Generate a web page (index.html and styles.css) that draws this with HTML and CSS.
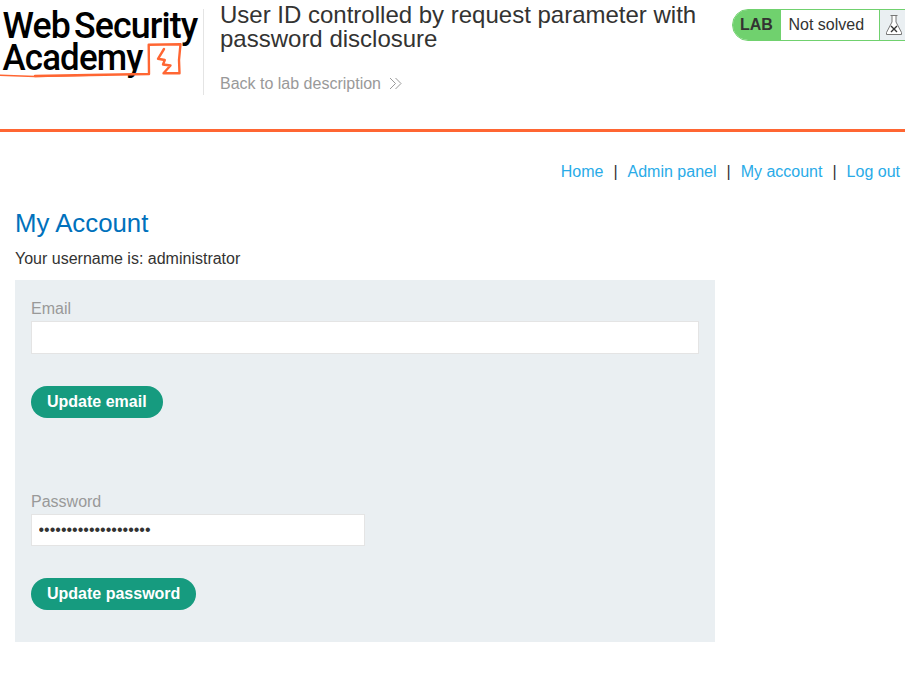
FILE: index.html
```html
<!DOCTYPE html>
<html lang="en">
<head>
<meta charset="utf-8">
<title>User ID controlled by request parameter with password disclosure</title>
<link rel="stylesheet" href="styles.css">
</head>
<body>
<header class="lab-header">
  <svg class="logo" width="203" height="90" viewBox="0 0 203 90" role="img" aria-label="Web Security Academy">
    <g class="logo-text">
      <text x="2.5" y="37.500" textLength="67.500" lengthAdjust="spacingAndGlyphs">Web</text>
      <text x="74" y="37.500" textLength="123.500" lengthAdjust="spacingAndGlyphs">Security</text>
      <text x="2.500" y="70" textLength="140" lengthAdjust="spacingAndGlyphs">Academy</text>
    </g>
    <g class="logo-mark">
      <path d="M35 76Q60 75.500 90 75T149 74L148.700 44.700L180.500 44.200L179 60L179.500 73.200L163.500 73.200L170.500 65.500L163 64.500L164.800 60L158 58.800L164 49"/>
      <path class="thin" d="M0 75.300L35 76.500L100 75"/>
    </g>
  </svg>
  <div class="title">
    <h2>User ID controlled by request parameter with password disclosure</h2>
    <a class="back">Back to lab description
      <svg width="13" height="14" viewBox="0 0 13 14"><path d="M1 1L6.500 6.500L1 12M6.500 1L12 6.500L6.500 12"/></svg>
    </a>
  </div>
  <div class="status">
    <span class="lab">LAB</span>
    <p>Not solved</p>
    <span class="flask">
      <svg width="18" height="22" viewBox="0 0 18 22"><path class="glass" d="M5.500 1.500H12.500M7 1.500V8L1.500 18.500V20.500H16.500V18.500L11 8V1.500"/><path class="cross" d="M6 12L12 18M12 12L6 18"/></svg>
    </span>
  </div>
</header>
<main>
  <nav>
    <a>Home</a><span>|</span><a>Admin panel</a><span>|</span><a>My account</a><span>|</span><a>Log out</a>
  </nav>
  <section class="account">
    <h1>My Account</h1>
    <p>Your username is: administrator</p>
    <div class="forms">
      <form>
        <label for="email">Email</label>
        <input id="email" type="email">
        <button type="button">Update email</button>
      </form>
      <form class="password-form">
        <label for="password">Password</label>
        <input id="password" type="password" value="xxxxxxxxxxxxxxxxxxxx">
        <button type="button">Update password</button>
      </form>
    </div>
  </section>
</main>
</body>
</html>
```

FILE: styles.css
```css
* { box-sizing: border-box; }
body {
  margin: 0;
  background: #fff;
  color: #333332;
  font: 16px/24px "Liberation Sans", Arial, sans-serif;
  overflow: hidden;
}
h1, h2, p { margin: 0; font-weight: 400; }
.lab-header {
  display: flex;
  align-items: flex-start;
  height: 132px;
  border-bottom: 3px solid #ff6633;
}
.logo { flex: none; display: block; overflow: visible; }
.logo-text { font: 500 37.5px Roboto, sans-serif; letter-spacing: -0.9px; fill: #000; }
.logo-mark { fill: none; stroke: #ff6633; stroke-width: 2.4; stroke-linejoin: round; stroke-linecap: round; }
.logo-mark .thin { stroke-width: 1.4; }
.title {
  flex: none;
  width: 512px;
  height: 86px;
  margin-top: 9px;
  padding-left: 16px;
  border-left: 1px solid #e4e4e4;
}
.title h2 { margin-top: -6px; font-size: 24px; }
.back { display: flex; align-items: center; gap: 8px; margin-top: 21px; color: #999; }
.back svg { fill: none; stroke: #999; stroke-width: 1; }
.status {
  display: flex;
  flex: none;
  width: 190px;
  height: 32px;
  margin: 9px 0 0 17px;
  border: 1px solid #70d16e;
  border-radius: 16px;
  overflow: hidden;
  line-height: 30px;
}
.lab { width: 48px; padding-left: 7px; background: #70d16e; font-weight: 700; }
.status p { width: 98px; padding-left: 7.5px; }
.flask {
  flex: 1;
  padding: 4px 0 0 5px;
  border-left: 1px solid #70d16e;
  background: #eaeff2;
}
.flask svg { display: block; }
.glass { fill: #fff; stroke: #777; }
.cross { fill: none; stroke: #333; stroke-width: 1.4; }
nav { display: flex; justify-content: flex-end; gap: 10px; padding: 28px 5px 0 0; }
nav a { color: #29abe8; }
.account { width: 700px; margin: 24px 0 0 15px; }
h1 { color: #0071bc; font-size: 25.8px; line-height: 30px; }
.account p { margin-top: 9px; }
.forms { height: 362px; margin-top: 9px; padding: 17px 16px 16px; background: #eaeff2; }
form { display: flex; flex-direction: column; align-items: flex-start; }
label { color: #999; }
input {
  width: 100%;
  height: 33px;
  margin: 0;
  padding: 0 6.5px;
  border: 1px solid #e4e4e4;
  border-radius: 0;
  background: #fff;
  color: #333332;
  font: inherit;
  outline: 0;
}
button {
  height: 32px;
  margin-top: 32px;
  padding: 0 16px;
  border: 0;
  border-radius: 16px;
  background: #169b7f;
  color: #fff;
  font: 700 16px/30px "Liberation Sans", Arial, sans-serif;
}
.password-form { margin-top: 72px; }
.password-form input { width: 334px; height: 32px; }
```
